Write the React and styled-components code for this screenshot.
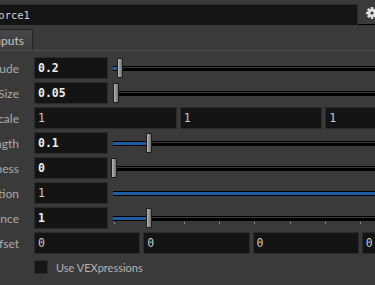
import React from 'react'
import styled, { createGlobalStyle } from 'styled-components'

const GlobalStyle = createGlobalStyle`
  html, body {
    margin: 0;
    padding: 0;
    background: #3a3a3a;
    overflow: hidden;
  }
  #root {
    width: 375px;
    height: 285px;
    overflow: hidden;
  }
`

const Panel = styled.div`
  width: 540px;
  margin-left: -58px;
  font-family: Lato, 'Liberation Sans', sans-serif;
`
const Header = styled.div`
  display: flex;
  align-items: center;
  height: 25px;
  padding-top: 4px;
  box-sizing: border-box;
  border-bottom: 1px solid #000;
`
const NameField = styled.div`
  margin-left: 45px;
  width: 371px;
  height: 21px;
  box-sizing: border-box;
  background: #151515;
  border: 1px solid #2a2a2a;
  border-bottom: none;
  padding-left: 4px;
  display: flex;
  align-items: center;
  font-family: 'DejaVu Sans Mono', monospace;
  font-size: 10.5px;
  color: #d2d2d2;
`
const GearBtn = styled.div`
  margin-left: 8px;
  margin-top: -3px;
  display: flex;
`
const TabBar = styled.div`
  height: 26px;
  box-sizing: border-box;
  padding-top: 4px;
  border-bottom: 1px solid #4c4c4c;
  display: flex;
`
const Tab = styled.div`
  margin-left: 40px;
  height: 21px;
  box-sizing: border-box;
  padding: 0 8px;
  border: 1px solid #262626;
  border-bottom: none;
  border-radius: 2px 2px 0 0;
  background: linear-gradient(#474747, #3d3d3d);
  color: #c4c4c4;
  font-size: 12px;
  display: flex;
  align-items: center;
`
const Content = styled.div`
  padding-top: 6px;
  display: flex;
  flex-direction: column;
  gap: 3px;
`
const Row = styled.div`
  display: flex;
  align-items: center;
  height: 22px;
`
const Label = styled.div`
  width: 77px;
  margin-right: 15px;
  display: flex;
  justify-content: flex-end;
  white-space: nowrap;
  overflow: hidden;
  font-size: 12px;
  color: #ababab;
`
const Field = styled.div`
  height: 22px;
  box-sizing: border-box;
  background: #141414;
  border: 1px solid #2b2b2b;
  padding-left: 3px;
  display: flex;
  align-items: center;
  font-family: 'DejaVu Sans Mono', monospace;
  font-size: 11.5px;
  font-weight: ${(p) => (p.bold ? 700 : 400)};
  color: ${(p) => (p.bold ? '#ededed' : '#c9c9c9')};
  width: ${(p) => (p.width ? p.width + 'px' : 'auto')};
  flex-shrink: 0;
`
const Vector = styled.div`
  width: 434px;
  display: grid;
  grid-template-columns: repeat(${(p) => p.count}, 1fr);
  gap: 3px;
`
const Slider = styled.div`
  position: relative;
  flex: 1;
  height: 22px;
  margin-left: 2px;
  display: flex;
  align-items: center;
`
const Track = styled.div`
  position: relative;
  margin-left: 3px;
  flex: 1;
  height: 5px;
  background: linear-gradient(#000 0 1px, #3a3a3a 1px 2px, #000 2px);
`
const Fill = styled.div`
  position: absolute;
  left: 0;
  top: 1px;
  height: 3px;
  background: #1f5ca4;
`
const Handle = styled.div`
  position: absolute;
  top: 1px;
  width: 6px;
  height: 20px;
  box-sizing: border-box;
  border: 1px solid #1c1c1c;
  border-radius: 1px;
  background: linear-gradient(to right, #b8b8b8, #939393 45%, #717171);
`
const Tick = styled.div`
  position: absolute;
  top: 15px;
  width: 1px;
  height: 2px;
  background: #8a8a8a;
`
const CheckRow = styled.div`
  display: flex;
  align-items: center;
  height: 22px;
  padding-left: 92px;
  margin-top: -1px;
`
const Check = styled.div`
  width: 14px;
  height: 14px;
  box-sizing: border-box;
  background: #151515;
  border: 1px solid #2c2c2c;
`
const CheckLabel = styled.span`
  margin-left: 8px;
  font-size: 11px;
  color: #b3b3b3;
`

const Gear = () => (
  <svg width='12' height='12' viewBox='-6 -6 12 12'>
    <g fill='#e2e2e2'>
      <circle r='3.9' />
      {[0, 45, 90, 135].map((a) => (
        <rect key={a} x='-1.3' y='-5.9' width='2.6' height='11.8' transform={`rotate(${a})`} />
      ))}
    </g>
    <circle r='1.6' fill='#3a3a3a' />
  </svg>
)

const FloatSlider = ({ label, value, bold, handle, fill, ticks }) => (
  <Row>
    <Label>{label}</Label>
    <Field width={74} bold={bold}>{value}</Field>
    <Slider>
      <Track>
        <Fill style={{ width: fill }} />
      </Track>
      {ticks &&
        Array.from({ length: 10 }, (_, i) => <Tick key={i} style={{ left: 4 + i * 35.1 }} />)}
      <Handle style={{ left: handle }} />
    </Slider>
  </Row>
)

const VectorRow = ({ label, values, bold }) => (
  <Row>
    <Label>{label}</Label>
    <Vector count={values.length}>
      {values.map((v, i) => (
        <Field key={i} bold={bold}>{v}</Field>
      ))}
    </Vector>
  </Row>
)

const App = () => {
  return (
    <>
      <GlobalStyle />
      <Panel>
        <Header>
          <NameField>force1</NameField>
          <GearBtn>
            <Gear />
          </GearBtn>
        </Header>
        <TabBar>
          <Tab>Inputs</Tab>
        </TabBar>
        <Content>
          <FloatSlider label='Amplitude' value='0.2' bold handle={7} fill={4} />
          <FloatSlider label='Swirl Size' value='0.05' bold handle={3} fill={2} />
          <VectorRow label='Scale' values={['1', '1', '1']} />
          <FloatSlider label='Pulse Length' value='0.1' bold handle={36} fill={33} />
          <FloatSlider label='Roughness' value='0' bold handle={1} fill={0} />
          <FloatSlider label='Attenuation' value='1' handle={600} fill='100%' />
          <FloatSlider label='Turbulence' value='1' bold handle={36} fill={33} ticks />
          <VectorRow label='Offset' values={['0', '0', '0', '0']} />
          <CheckRow>
            <Check />
            <CheckLabel>Use VEXpressions</CheckLabel>
          </CheckRow>
        </Content>
      </Panel>
    </>
  )
}

export default App
